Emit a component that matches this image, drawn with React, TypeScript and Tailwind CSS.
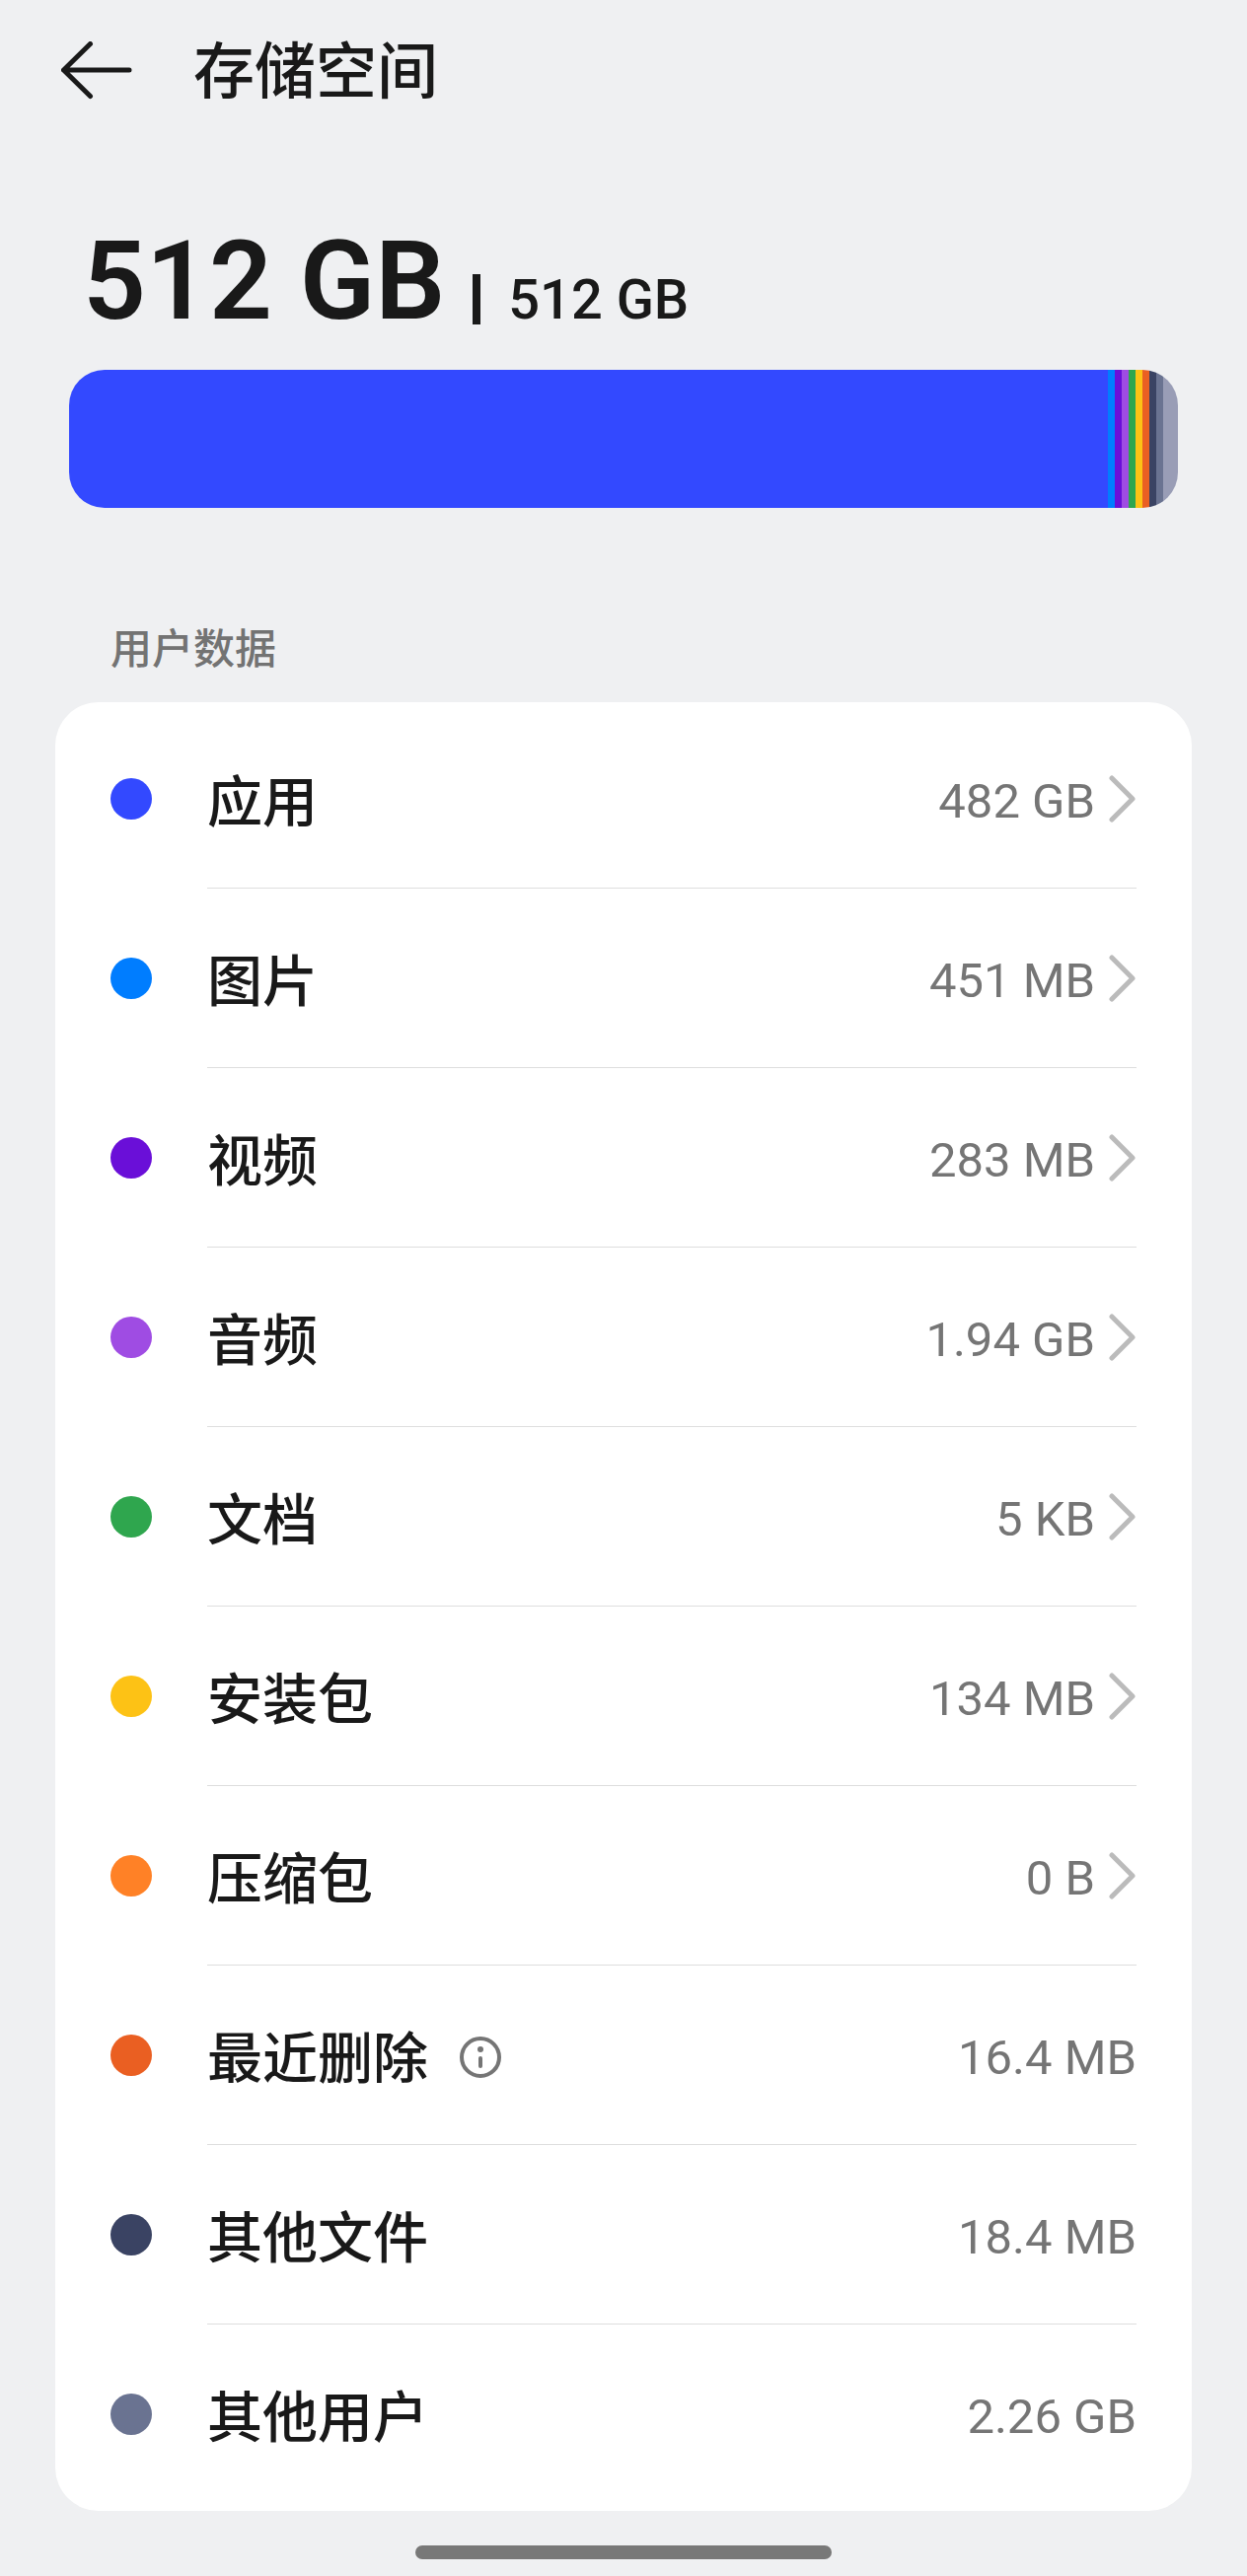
import React from 'react'

const BackArrow = () => (
    <svg aria-hidden="true" viewBox="0 0 72 60" className="w-[72px] h-[60px]" fill="none" stroke="currentColor" strokeWidth="5" strokeLinecap="round" strokeLinejoin="round">
        <path d="M29.5 2.5 L2.5 29 L29.5 55.5 M2.5 29 H69" />
    </svg>
)

const Chevron = () => (
    <svg aria-hidden="true" viewBox="0 0 28 48" className="w-7 h-12 ml-3.5 text-[#bbbbbb]" fill="none" stroke="currentColor" strokeWidth="5" strokeLinecap="round" strokeLinejoin="round">
        <path d="M3 3 L24 24 L3 45" />
    </svg>
)

const InfoIcon = () => (
    <svg aria-hidden="true" viewBox="0 0 42 42" className="w-[42px] h-[42px]">
        <circle cx="21" cy="21" r="19" fill="none" stroke="currentColor" strokeWidth="4" />
        <circle cx="21" cy="13" r="3" fill="currentColor" />
        <path d="M21 22 V30" stroke="currentColor" strokeWidth="4" strokeLinecap="round" />
    </svg>
)

const StorageScreen = () => {
    const segments = [
        'bg-[#3349ff] flex-1',
        'bg-[#007dff] w-[7px]',
        'bg-[#6a0fd8] w-[7px]',
        'bg-[#9f4ce3] w-[7px]',
        'bg-[#2fa64e] w-[7px]',
        'bg-[#fdc215] w-[7px]',
        'bg-[#ea5f22] w-[7px]',
        'bg-[#3a4363] w-[7px]',
        'bg-[#6a7391] w-[7px]',
        'bg-[#999db6] w-[15px]',
    ]

    const categories = [
        { name: '应用', size: '482 GB', dot: 'bg-[#3349ff]', link: true },
        { name: '图片', size: '451 MB', dot: 'bg-[#007dff]', link: true },
        { name: '视频', size: '283 MB', dot: 'bg-[#6a0fd8]', link: true },
        { name: '音频', size: '1.94 GB', dot: 'bg-[#9f4ce3]', link: true },
        { name: '文档', size: '5 KB', dot: 'bg-[#2fa64e]', link: true },
        { name: '安装包', size: '134 MB', dot: 'bg-[#fdc215]', link: true },
        { name: '压缩包', size: '0 B', dot: 'bg-[#ff8126]', link: true },
        { name: '最近删除', size: '16.4 MB', dot: 'bg-[#ea5f22]', info: true },
        { name: '其他文件', size: '18.4 MB', dot: 'bg-[#3a4363]' },
        { name: '其他用户', size: '2.26 GB', dot: 'bg-[#6a7391]' },
    ]

    return (
        <div className="w-full min-h-screen bg-[#eff0f2] text-[#191919] font-['Roboto','Noto_Sans_CJK_SC',sans-serif]">
            <header className="flex items-center gap-[62px] h-36 px-[62px]">
                <button type="button" aria-label="返回">
                    <BackArrow />
                </button>
                <h1 className="pt-1 text-[62px] leading-[72px] font-medium">存储空间</h1>
            </header>

            <main className="px-14">
                <section className="px-3.5 pt-[81px]">
                    <div className="flex items-baseline px-3.5">
                        <span className="text-[112px] leading-[120px] font-semibold">512 GB</span>
                        <span className="w-2 h-[51px] mx-7 mb-4 bg-[#191919] self-end" />
                        <span className="text-[56px] leading-[64px] font-medium">512 GB</span>
                    </div>
                    <div className="flex h-[140px] mt-[30px] rounded-[36px] overflow-hidden">
                        {segments.map((segment) => (
                            <div key={segment} className={segment} />
                        ))}
                    </div>
                </section>

                <h2 className="mt-[114px] px-14 text-[42px] leading-[60px] font-medium text-[#737373]">用户数据</h2>

                <ul className="mt-[23px] py-[7px] px-14 bg-white rounded-[44px]">
                    {categories.map((item) => (
                        <li key={item.name} className="group flex items-center h-[182px]">
                            <span className={`w-[42px] h-[42px] mr-14 rounded-full shrink-0 ${item.dot}`} />
                            <div className="flex flex-1 items-center h-full border-b border-[#dedede] group-last:border-transparent">
                                <span className="pt-2 text-[56px] leading-[64px] font-medium">{item.name}</span>
                                {item.info && (
                                    <button type="button" aria-label="说明" className="ml-8 pt-1 text-[#757575]">
                                        <InfoIcon />
                                    </button>
                                )}
                                {item.link ? (
                                    <a href="#" className="flex flex-1 items-center justify-end text-[49px] leading-[64px] text-[#757575]">
                                        <span className="pt-1.5">{item.size}</span>
                                        <Chevron />
                                    </a>
                                ) : (
                                    <span className="flex-1 pt-1.5 text-right text-[49px] leading-[64px] text-[#757575]">{item.size}</span>
                                )}
                            </div>
                        </li>
                    ))}
                </ul>
            </main>

            <div className="w-1/3 h-3.5 mt-[35px] mx-auto rounded-full bg-[#787878]" />
        </div>
    )
}

export default StorageScreen
